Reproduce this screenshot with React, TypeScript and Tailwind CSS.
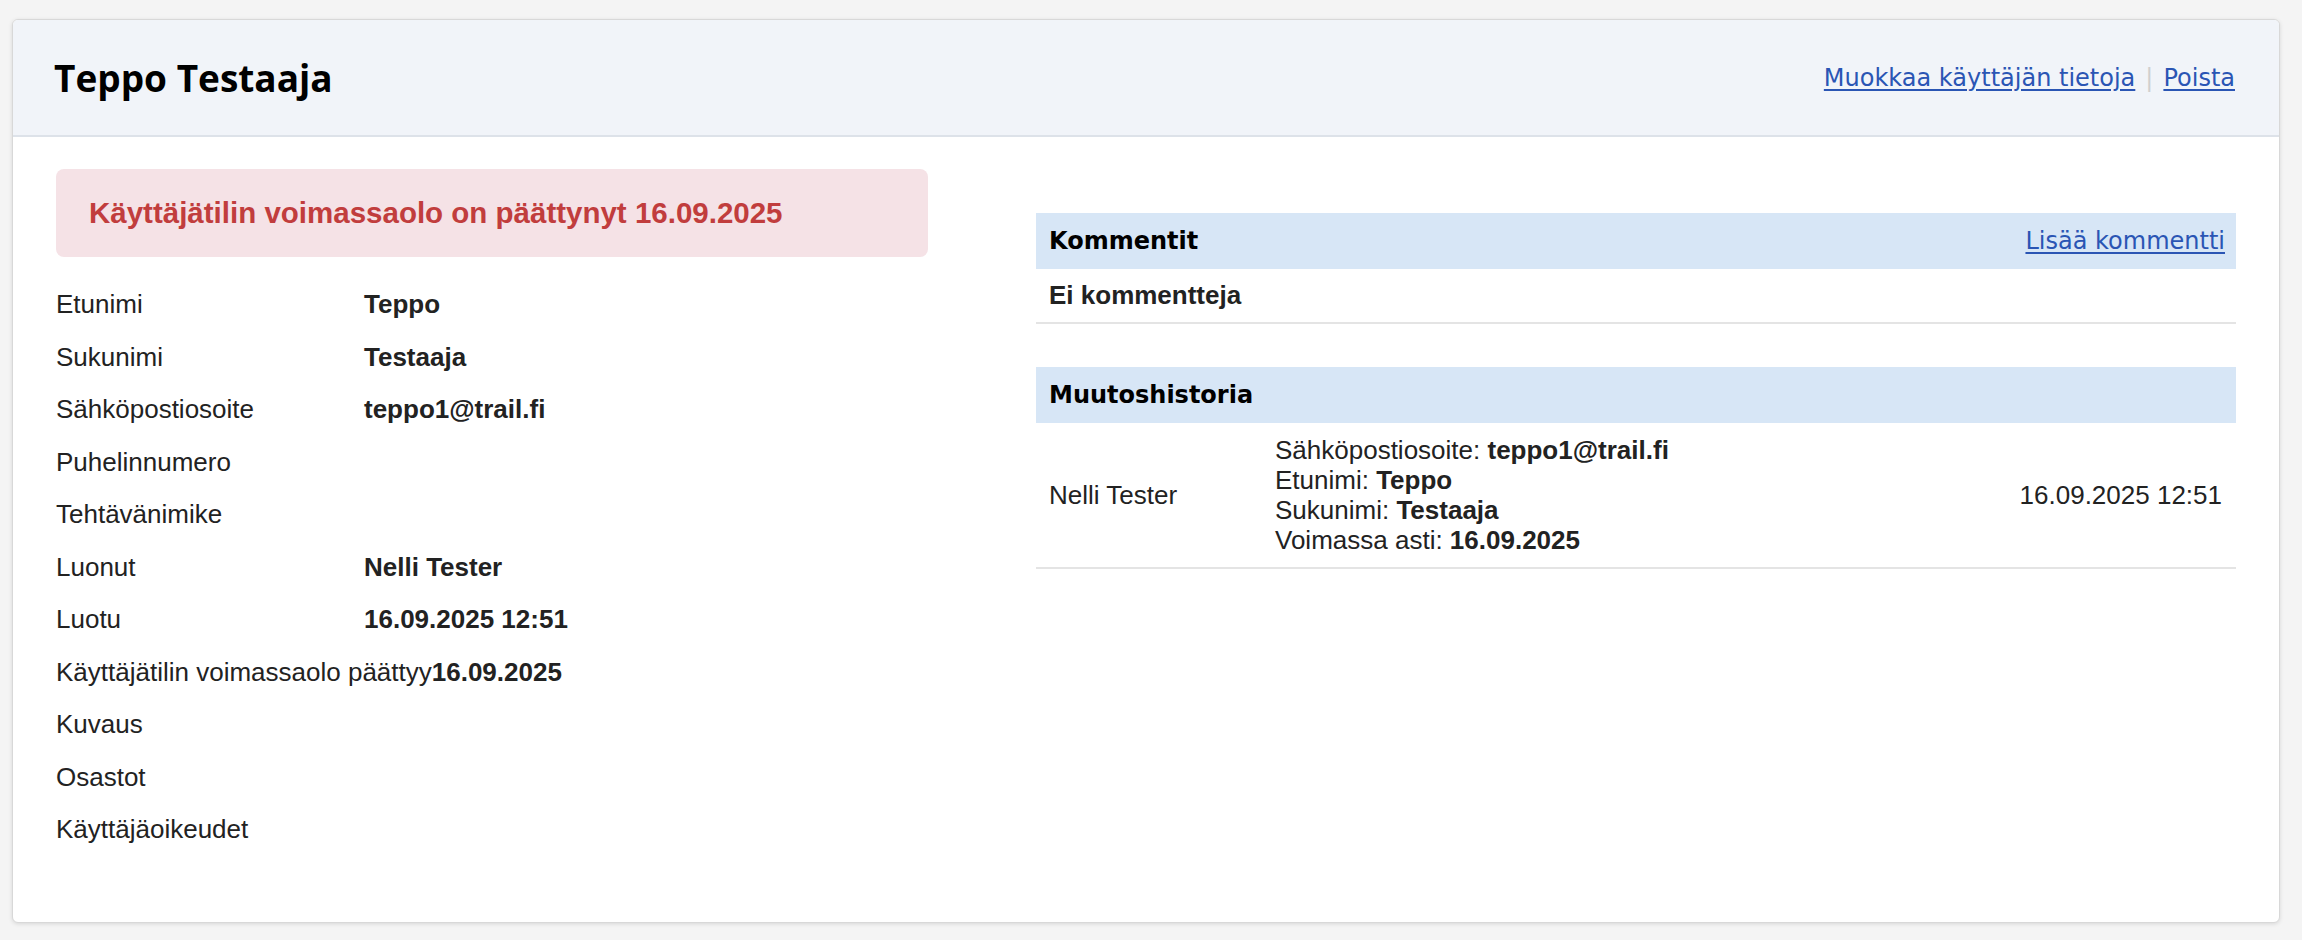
import React from 'react';

const rows: { label: string; value?: string }[] = [
  { label: 'Etunimi', value: 'Teppo' },
  { label: 'Sukunimi', value: 'Testaaja' },
  { label: 'Sähköpostiosoite', value: 'teppo1@trail.fi' },
  { label: 'Puhelinnumero' },
  { label: 'Tehtävänimike' },
  { label: 'Luonut', value: 'Nelli Tester' },
  { label: 'Luotu', value: '16.09.2025 12:51' },
  { label: 'Käyttäjätilin voimassaolo päättyy', value: '16.09.2025' },
  { label: 'Kuvaus' },
  { label: 'Osastot' },
  { label: 'Käyttäjäoikeudet' },
];

const changes = [
  ['Sähköpostiosoite', 'teppo1@trail.fi'],
  ['Etunimi', 'Teppo'],
  ['Sukunimi', 'Testaaja'],
  ['Voimassa asti', '16.09.2025'],
];

const ui = "font-['DejaVu_Sans',sans-serif]";

export default function App() {
  return (
    <div className="min-h-screen bg-[#f4f4f4] pt-[19px] pb-[18px] font-['Liberation_Sans',Arial,sans-serif] text-[26px] text-[#222]">
      <div className="ml-[12px] w-[2268px] rounded-md border border-[#d8d8d8] bg-white shadow-[0_1px_4px_rgba(0,0,0,0.12)] overflow-hidden">
        {/* Header */}
        <div className="flex h-[117px] items-center justify-between border-b-2 border-[#dde2e9] bg-[#f1f4f9] pl-[41px] pr-[44px]">
          <h1 className="font-['Open_Sans',sans-serif] text-[37px] font-bold text-black">Teppo Testaaja</h1>
          <div className={`${ui} flex items-center text-[24px]`}>
            <a href="#" className="text-[#2a55b4] underline underline-offset-[3px]">Muokkaa käyttäjän tietoja</a>
            <span className="mx-[10px] text-[#cfcfcf]">|</span>
            <a href="#" className="text-[#2a55b4] underline underline-offset-[3px]">Poista</a>
          </div>
        </div>

        {/* Body */}
        <div className="flex justify-between px-[43px] pt-[32px] pb-[66px]">
          <div className="w-[872px]">
            <div className="flex h-[88px] items-center rounded-lg bg-[#f5e2e6] px-[33px] text-[29.5px] font-bold text-[#c13d3d]">
              Käyttäjätilin voimassaolo on päättynyt 16.09.2025
            </div>
            <div className="mt-[21px]">
              {rows.map((r) => (
                <div key={r.label} className="flex py-[11px] leading-[30.5px]">
                  <div className="min-w-[308px] whitespace-nowrap">{r.label}</div>
                  <div className="font-bold">{r.value}</div>
                </div>
              ))}
            </div>
          </div>

          <div className="mt-[44px] w-[1200px]">
            <div className="flex h-[56px] items-center justify-between bg-[#d7e6f6] pl-[13px] pr-[11px]">
              <span className={`${ui} text-[24px] font-bold text-black`}>Kommentit</span>
              <a href="#" className={`${ui} text-[24px] text-[#2a55b4] underline underline-offset-[3px]`}>Lisää kommentti</a>
            </div>
            <div className="flex h-[55px] items-center border-b-2 border-[#e4e4e4] pl-[13px] font-bold">
              Ei kommentteja
            </div>

            <div className="mt-[43px] flex h-[56px] items-center bg-[#d7e6f6] pl-[13px]">
              <span className={`${ui} text-[24px] font-bold text-black`}>Muutoshistoria</span>
            </div>
            <div className="flex items-center border-b-2 border-[#e4e4e4] py-[12px] leading-[30px]">
              <div className="w-[239px] pl-[13px]">Nelli Tester</div>
              <div className="flex-1">
                {changes.map(([k, v]) => (
                  <div key={k}>
                    {k}: <b>{v}</b>
                  </div>
                ))}
              </div>
              <div className="pr-[14px]">16.09.2025 12:51</div>
            </div>
          </div>
        </div>
      </div>
    </div>
  );
}
